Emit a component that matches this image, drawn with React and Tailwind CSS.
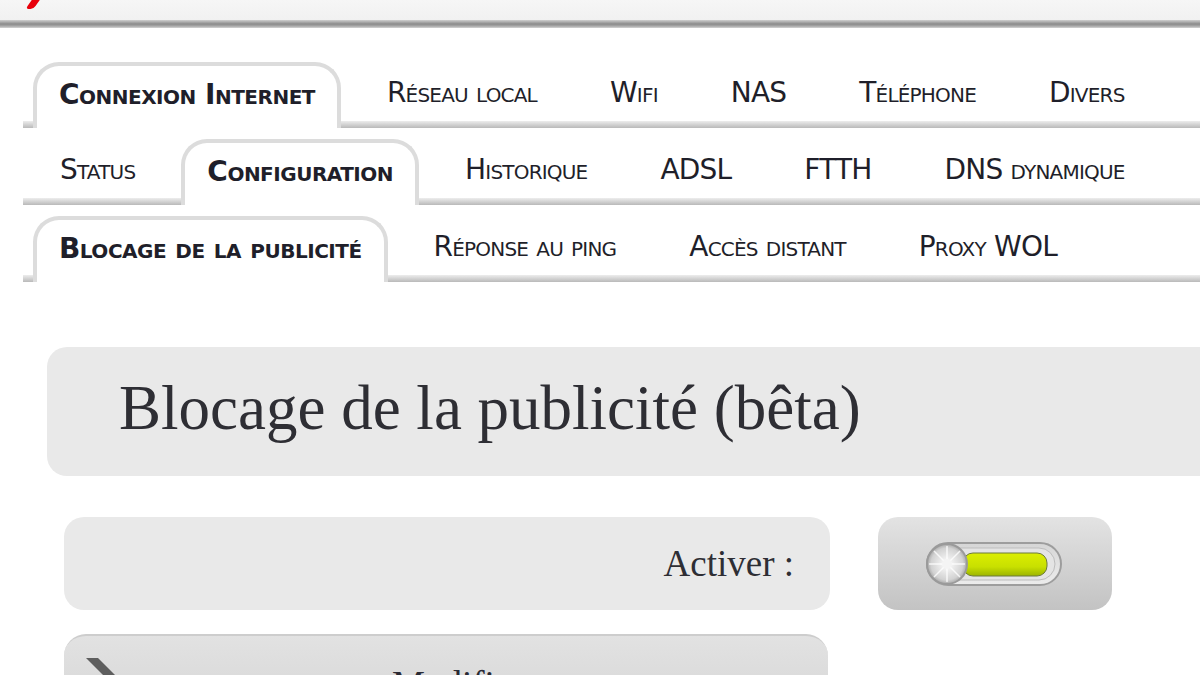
import React from "react";

const rows = [
  ["Connexion Internet", "Réseau local", "Wifi", "NAS", "Téléphone", "Divers"],
  ["Status", "Configuration", "Historique", "ADSL", "FTTH", "DNS dynamique"],
  ["Blocage de la publicité", "Réponse au ping", "Accès distant", "Proxy WOL"],
];
const activeTabs = ["Connexion Internet", "Configuration", "Blocage de la publicité"];

const Tab = ({ label, active }) =>
  active ? (
    <div className="flex items-center self-stretch rounded-t-[26px] border-x-4 border-t-4 border-[#dcdcdc] bg-white px-[22px] pb-[4px] font-bold tracking-[-0.5px]">
      {label}
    </div>
  ) : (
    <div className="flex items-center px-[27px] pb-[4px] tracking-[-0.8px]">{label}</div>
  );

const TabRow = ({ items }) => (
  <div className="ml-[23px] flex h-[66px] gap-[19px] whitespace-nowrap bg-[linear-gradient(to_bottom,#fff_0,#fff_calc(100%-7px),#ededed_calc(100%-7px),#b9b9b9_100%)] pl-[10px] text-[28px] text-[#1f1f2a] [font-variant:small-caps]">
    {items.map((label) => (
      <Tab key={label} label={label} active={activeTabs.includes(label)} />
    ))}
  </div>
);

const Toggle = () => (
  <svg width="140" height="46" viewBox="0 0 140 46">
    <defs>
      <linearGradient id="ring" x1="0" y1="0" x2="0" y2="1">
        <stop offset="0" stopColor="#d6d6d6" />
        <stop offset="1" stopColor="#ececec" />
      </linearGradient>
      <linearGradient id="lime" x1="0" y1="0" x2="0" y2="1">
        <stop offset="0" stopColor="#dcee00" />
        <stop offset="0.6" stopColor="#c8e000" />
        <stop offset="1" stopColor="#9cb400" />
      </linearGradient>
      <radialGradient id="knob" cx="0.5" cy="0.5" r="0.5">
        <stop offset="0" stopColor="#ffffff" />
        <stop offset="0.8" stopColor="#d2d2d2" />
        <stop offset="1" stopColor="#a8a8a8" />
      </radialGradient>
    </defs>
    <rect x="2" y="2" width="134" height="42" rx="21" fill="url(#ring)" stroke="#9d9d9d" strokeWidth="2" />
    <rect x="8" y="7" width="122" height="32" rx="16" fill="#e4e4e4" stroke="#bdbdbd" strokeWidth="1" />
    <rect x="38" y="12" width="84" height="23" rx="10" fill="url(#lime)" stroke="#6d7a3a" strokeWidth="1" />
    <circle cx="22" cy="23" r="20" fill="url(#knob)" stroke="#9a9a9a" strokeWidth="2" />
    <path d="M22 5 L22 41 M4 23 L40 23 M9 10 L35 36 M35 10 L9 36" stroke="#ffffff" strokeWidth="1.5" opacity="0.8" />
    <circle cx="22" cy="23" r="5" fill="#f4f4f4" />
  </svg>
);

export default function App() {
  return (
    <div className="h-[675px] w-[1200px] overflow-hidden bg-white">
      <div className="relative h-[28px] bg-[linear-gradient(to_bottom,#f6f6f6_0,#f1f1f1_20px,#cfcfcf_20px,#8a8a8a_24px,#a6a6a6_26px,#d4d4d4_28px)]">
        <div className="absolute left-[30px] top-[-4px] h-[13px] w-[8px] skew-x-[-35deg] rounded-[3px] bg-[#e8000b]" />
      </div>

      <div className="mt-[34px] flex flex-col gap-[11px] font-['DejaVu_Sans',Verdana,sans-serif]">
        {rows.map((items, i) => (
          <TabRow key={i} items={items} />
        ))}
      </div>

      <div className="ml-[47px] mt-[65px] flex h-[129px] w-[1200px] items-center rounded-[20px] bg-[#e9e9e9] pb-[6px] pl-[72px] font-['Liberation_Serif',Georgia,serif] text-[63px] text-[#2e2e34]">
        Blocage de la publicité (bêta)
      </div>

      <div className="ml-[64px] mt-[41px] flex gap-[48px] font-['Liberation_Serif',Georgia,serif]">
        <div className="flex h-[93px] w-[766px] items-center justify-end rounded-[20px] bg-[#e9e9e9] pr-[36px] text-[37px] text-[#2e2e34]">
          Activer :
        </div>
        <div className="flex h-[93px] w-[234px] items-center justify-center rounded-[20px] bg-[linear-gradient(to_bottom,#e3e3e3,#c3c3c3)]">
          <Toggle />
        </div>
      </div>

      <div className="ml-[64px] mt-[24px] flex h-[80px] w-[764px] rounded-t-[22px] border-t-2 border-[#cdcdcd] bg-[linear-gradient(to_bottom,#e2e2e2,#d6d6d6)] pl-[22px] pt-[22px] font-['Liberation_Serif',Georgia,serif]">
        <div className="h-[40px] w-[34px]">
          <svg width="34" height="40" viewBox="0 0 34 40">
            <path d="M0 0 L12 0 L34 22 L22 22 Z" fill="#5e5e5e" />
          </svg>
        </div>
        <div className="ml-[272px] pt-[7px] text-[37px] leading-[40px] text-[#2a2a34]">Modifier</div>
      </div>
    </div>
  );
}
